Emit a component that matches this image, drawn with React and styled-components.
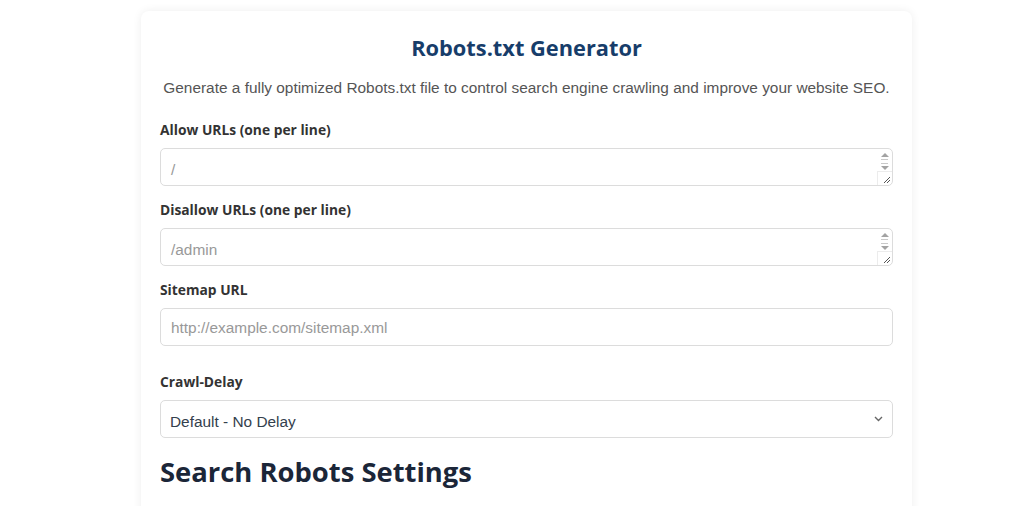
import React from 'react';
import styled, { createGlobalStyle } from 'styled-components';

const GlobalStyle = createGlobalStyle`
  html, body {
    margin: 0;
    padding: 0;
    background: #ffffff;
  }
  body {
    font-family: "Open Sans", "Liberation Sans", sans-serif;
    overflow: hidden;
  }
`;

const Page = styled.div`
  padding: 11px 0 0 141px;
`;

const Card = styled.div`
  width: 771px;
  box-sizing: border-box;
  background: #fff;
  border-radius: 8px;
  box-shadow: 0 0 10px rgba(0, 0, 0, 0.07);
  padding: 22px 19px 30px;
`;

const Title = styled.h1`
  margin: 0;
  text-align: center;
  font-family: "Open Sans", sans-serif;
  font-weight: 700;
  font-size: 21.8px;
  line-height: 30px;
  color: #173d6a;
`;

const Subtitle = styled.p`
  margin: 14px 0 0;
  text-align: center;
  font-family: "Liberation Sans", Arial, sans-serif;
  font-size: 15.4px;
  line-height: 22px;
  color: #555;
`;

const Field = styled.div`
  display: flex;
  flex-direction: column;
  gap: 8px;
  margin-top: ${p => p.$top}px;
`;

const Label = styled.label`
  font-family: "Open Sans", sans-serif;
  font-weight: 700;
  font-size: 13.8px;
  line-height: 20px;
  color: #333;
`;

const boxStyles = `
  width: 100%;
  height: 38px;
  box-sizing: border-box;
  border: 1px solid #dcdcdc;
  border-radius: 5px;
  background: #fff;
  font-family: "Liberation Sans", Arial, sans-serif;
  font-size: 15.4px;
  color: #333;
  outline: none;
  margin: 0;
  &::placeholder {
    color: #999;
  }
`;

const AreaWrap = styled.div`
  position: relative;
`;

const TextArea = styled.textarea`
  ${boxStyles}
  display: block;
  padding: 12px 26px 8px 10px;
  line-height: 18px;
  resize: none;
  overflow: hidden;
`;

/* mock of the classic textarea scrollbar + resize corner */
const Gutter = styled.div`
  position: absolute;
  top: 1px;
  right: 1px;
  bottom: 1px;
  width: 15px;
  display: flex;
  flex-direction: column;
  align-items: center;
  pointer-events: none;
`;

const Arrow = styled.span`
  width: 0;
  height: 0;
  margin-top: ${p => (p.$up ? '4px' : '0')};
  border-left: 4px solid transparent;
  border-right: 4px solid transparent;
  ${p => (p.$up ? 'border-bottom: 4px solid #a3a3a3;' : 'border-top: 4px solid #a3a3a3;')}
`;

const Thumb = styled.span`
  width: 7px;
  height: 3px;
  margin: 2px 0;
  border-top: 1px solid #c9c9c9;
  border-bottom: 1px solid #c9c9c9;
`;

const Corner = styled.div`
  margin-top: auto;
  width: 15px;
  height: 14px;
  box-sizing: border-box;
  border-left: 1px solid #ececec;
  border-top: 1px solid #ececec;
  display: flex;
  align-items: flex-end;
  justify-content: flex-end;
`;

const Grip = styled.svg`
  width: 9px;
  height: 9px;
  margin: 0 1px 1px 0;
`;

const Input = styled.input`
  ${boxStyles}
  display: block;
  padding: 1px 10px 0;
`;

const SelectWrap = styled.div`
  position: relative;
`;

const Select = styled.select`
  ${boxStyles}
  display: block;
  appearance: none;
  padding: 4px 30px 0 9px;
  color: #34404d;
`;

const Chevron = styled.svg`
  position: absolute;
  right: 10px;
  top: 16px;
  width: 9px;
  height: 6px;
  pointer-events: none;
`;

const SectionHeading = styled.h2`
  margin: 14px 0 0;
  font-family: "Open Sans", sans-serif;
  font-weight: 700;
  font-size: 27.4px;
  line-height: 40px;
  color: #1b2638;
`;

function ScrollTextArea({ placeholder }) {
  return (
    <AreaWrap>
      <TextArea rows={1} placeholder={placeholder} />
      <Gutter>
        <Arrow $up />
        <Thumb />
        <Arrow />
        <Corner>
          <Grip viewBox="0 0 9 9">
            <path d="M8 2L2 8M8 5L5 8" stroke="#555" strokeWidth="1" fill="none" />
          </Grip>
        </Corner>
      </Gutter>
    </AreaWrap>
  );
}

export default function App() {
  return (
    <>
      <GlobalStyle />
      <Page>
        <Card>
          <Title>Robots.txt Generator</Title>
          <Subtitle>
            Generate a fully optimized Robots.txt file to control search engine crawling and improve your website SEO.
          </Subtitle>

          <Field $top={21}>
            <Label>Allow URLs (one per line)</Label>
            <ScrollTextArea placeholder="/" />
          </Field>

          <Field $top={14}>
            <Label>Disallow URLs (one per line)</Label>
            <ScrollTextArea placeholder="/admin" />
          </Field>

          <Field $top={14}>
            <Label>Sitemap URL</Label>
            <Input type="text" placeholder="http://example.com/sitemap.xml" />
          </Field>

          <Field $top={26}>
            <Label>Crawl-Delay</Label>
            <SelectWrap>
              <Select defaultValue="0">
                <option value="0">Default - No Delay</option>
                <option value="5">5 Seconds</option>
                <option value="10">10 Seconds</option>
                <option value="20">20 Seconds</option>
                <option value="60">60 Seconds</option>
              </Select>
              <Chevron viewBox="0 0 9 6">
                <path d="M1 1l3.5 3.5L8 1" fill="none" stroke="#666" strokeWidth="1.4" />
              </Chevron>
            </SelectWrap>
          </Field>

          <SectionHeading>Search Robots Settings</SectionHeading>
        </Card>
      </Page>
    </>
  );
}
